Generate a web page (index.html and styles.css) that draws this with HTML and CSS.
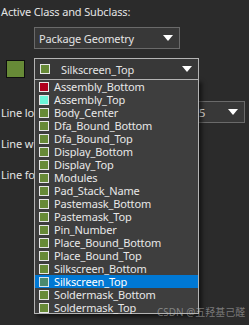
FILE: index.html
```html
<!DOCTYPE html>
<html>
<head>
<meta charset="utf-8">
<link rel="stylesheet" href="styles.css">
</head>
<body>
<div class="panel">
  <div class="title">Active Class and Subclass:</div>
  <div class="row1">
    <div class="combo combo-class"><span class="combo-text">Package Geometry</span><span class="arrow"></span></div>
  </div>
  <div class="row2">
    <div class="big-swatch"></div>
    <div class="combo combo-sub">
      <span class="sw sw-green"></span>
      <span class="combo-text sub-text">Silkscreen_Top</span>
      <span class="arrow"></span>
    </div>
  </div>
  <div class="lines">
    <div class="line-row">
      <span class="label">Line lock:</span>
      <div class="combo combo-lock"><span class="combo-text">0.5</span><span class="arrow"></span></div>
    </div>
    <div class="line-row"><span class="label">Line width:</span></div>
    <div class="line-row"><span class="label">Line font:</span></div>
  </div>

  <ul class="droplist">
    <li><span class="sw sw-red"></span><span class="item-text">Assembly_Bottom</span></li>
    <li><span class="sw sw-cyan"></span><span class="item-text">Assembly_Top</span></li>
    <li><span class="sw sw-green"></span><span class="item-text">Body_Center</span></li>
    <li><span class="sw sw-green"></span><span class="item-text">Dfa_Bound_Bottom</span></li>
    <li><span class="sw sw-green"></span><span class="item-text">Dfa_Bound_Top</span></li>
    <li><span class="sw sw-green"></span><span class="item-text">Display_Bottom</span></li>
    <li><span class="sw sw-green"></span><span class="item-text">Display_Top</span></li>
    <li><span class="sw sw-green"></span><span class="item-text">Modules</span></li>
    <li><span class="sw sw-green"></span><span class="item-text">Pad_Stack_Name</span></li>
    <li><span class="sw sw-green"></span><span class="item-text">Pastemask_Bottom</span></li>
    <li><span class="sw sw-green"></span><span class="item-text">Pastemask_Top</span></li>
    <li><span class="sw sw-green"></span><span class="item-text">Pin_Number</span></li>
    <li><span class="sw sw-green"></span><span class="item-text">Place_Bound_Bottom</span></li>
    <li><span class="sw sw-green"></span><span class="item-text">Place_Bound_Top</span></li>
    <li><span class="sw sw-green"></span><span class="item-text">Silkscreen_Bottom</span></li>
    <li class="selected"><span class="sw sw-sel"></span><span class="item-text">Silkscreen_Top</span></li>
    <li><span class="sw sw-green"></span><span class="item-text">Soldermask_Bottom</span></li>
    <li><span class="sw sw-green"></span><span class="item-text">Soldermask_Top</span></li>
  </ul>

  <div class="watermark">CSDN @五羟基己醛</div>
</div>
</body>
</html>
```
FILE: styles.css
```css
html, body {
  margin: 0;
  padding: 0;
  background: #2b2b2b;
  width: 249px;
  height: 325px;
  overflow: hidden;
}
body {
  font-family: "Noto Sans", "Noto Sans CJK SC", sans-serif;
  font-size: 11px;
  letter-spacing: -0.15px;
  color: #e4e4e4;
}
.panel {
  position: relative;
  width: 249px;
  height: 325px;
}
.title {
  padding: 5px 0 0 1px;
  height: 14px;
  line-height: 14px;
  white-space: nowrap;
}
.row1 {
  margin-top: 8px;
  padding-left: 34px;
}
.combo {
  box-sizing: border-box;
  position: relative;
  display: flex;
  align-items: center;
  height: 22px;
  border: 1px solid #6a6a6a;
  background: #383838;
  padding-left: 4px;
  white-space: nowrap;
  overflow: hidden;
}
.combo-class {
  width: 146px;
}
.arrow {
  position: absolute;
  right: 6px;
  top: 7px;
  width: 0;
  height: 0;
  border-left: 5px solid transparent;
  border-right: 5px solid transparent;
  border-top: 6px solid #ffffff;
}
.row2 {
  margin-top: 9px;
  display: flex;
  align-items: flex-start;
}
.big-swatch {
  box-sizing: border-box;
  width: 19px;
  height: 18px;
  margin: 2px 0 0 6px;
  background: #678a37;
  border: 1px solid #0e0e0e;
}
.combo-sub {
  margin-left: 9px;
  width: 165px;
  height: 21px;
  border-color: #b4b4b4;
  border-bottom: none;
  padding-left: 5px;
}
.sub-text {
  margin-left: 11px;
}
.sw {
  box-sizing: border-box;
  display: inline-block;
  width: 10px;
  height: 10px;
  border: 1px solid #e8e8e8;
  flex: none;
}
.sw-green { background: #678a37; }
.sw-red { background: #b0001e; }
.sw-cyan { background: #6cf5d8; }
.sw-sel { background: #4b8a70; border-color: #d8e6f2; }

.lines {
  margin-top: 22px;
  display: flex;
  flex-direction: column;
  gap: 9px;
}
.line-row {
  position: relative;
  display: flex;
  align-items: center;
  height: 22px;
  padding-left: 1px;
}
.label {
  white-space: nowrap;
}
.combo-lock {
  position: absolute;
  left: 185px;
  top: 0;
  width: 60px;
  height: 22px;
}

.droplist {
  position: absolute;
  left: 34px;
  top: 79px;
  box-sizing: border-box;
  width: 165px;
  height: 235px;
  margin: 0;
  padding: 0;
  list-style: none;
  background: #3e3e3e;
  border: 1px solid #b4b4b4;
  box-shadow: 3px 3px 4px rgba(0, 0, 0, 0.55);
}
.droplist li {
  display: flex;
  align-items: center;
  gap: 5px;
  height: 13px;
  padding-left: 4px;
  color: #e8e8e8;
  white-space: nowrap;
  overflow: hidden;
}
.item-text {
  display: block;
  line-height: 13px;
  height: 13px;
}
.droplist li.selected {
  background: #0078d4;
  color: #ffffff;
}
.watermark {
  position: absolute;
  left: 157px;
  top: 306px;
  font-size: 10px;
  line-height: 12px;
  letter-spacing: 0;
  color: rgba(190, 190, 190, 0.55);
  white-space: nowrap;
}
```
